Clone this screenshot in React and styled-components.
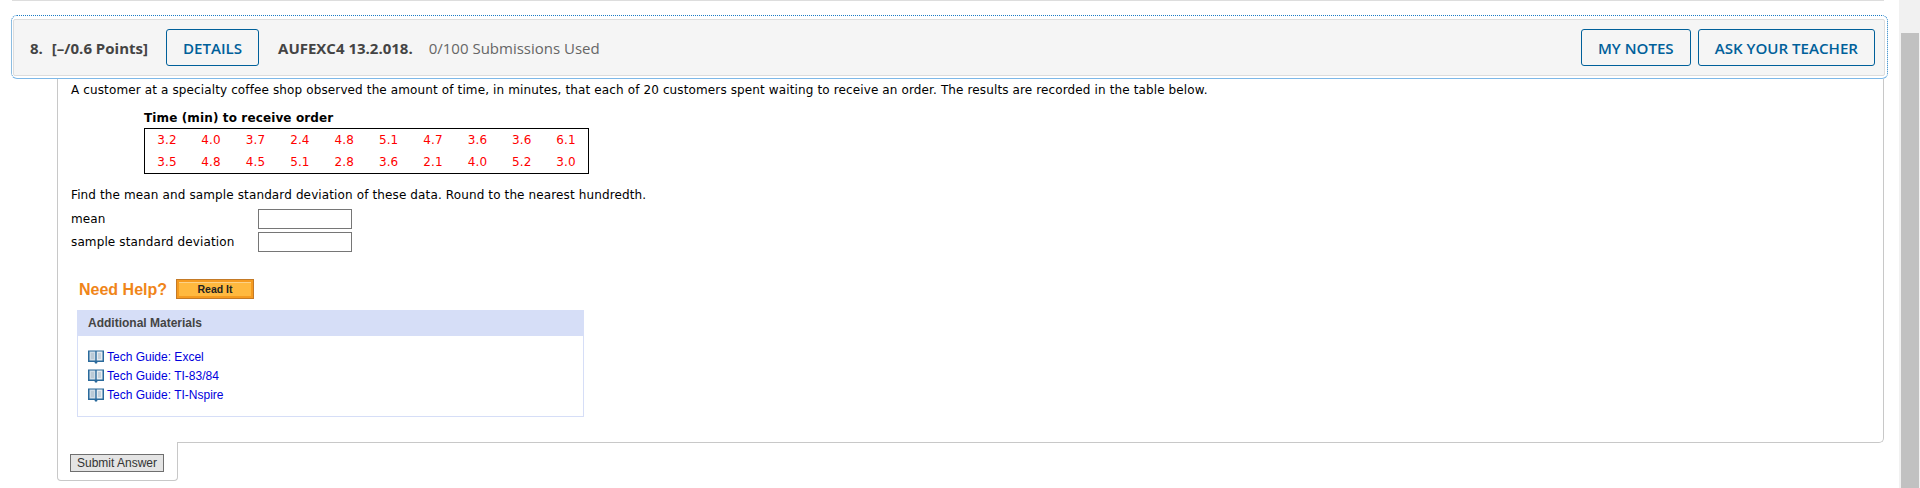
import React from "react";
import styled, { createGlobalStyle } from "styled-components";

const GlobalStyle = createGlobalStyle`
  html, body {
    margin: 0;
    padding: 0;
    height: 100%;
    overflow: hidden;
    background: #ffffff;
  }
`;

const Page = styled.div`
  display: flex;
  width: 1920px;
  height: 488px;
  overflow: hidden;
`;

const Main = styled.div`
  flex: 1;
  min-width: 0;
`;

const Track = styled.div`
  width: 21px;
  padding: 33px 1px 0 2px;
  box-sizing: border-box;
  background: #f1f1f1;
`;

const Thumb = styled.div`
  height: 455px;
  background: #c1c1c1;
`;

const TopRule = styled.div`
  height: 1px;
  margin: 0 15px 14px 12px;
  background: #dddddd;
`;

const FocusRing = styled.div`
  margin: 0 11px 0 11px;
  padding: 3px 2px 2px 1px;
  border: 1px dotted #1c7cc4;
  border-bottom: 1px solid #7db8e8;
  border-radius: 6px;
`;

const QuestionBar = styled.div`
  display: flex;
  align-items: center;
  height: 57px;
  box-sizing: border-box;
  padding: 0 9px 0 16px;
  background: #f5f5f5;
  border: 1px solid #dddddd;
  border-radius: 2px;
  font-family: "Open Sans", sans-serif;
  font-size: 15px;
  color: #444444;
`;

const Number = styled.span`
  font-weight: 700;
  margin-right: 9px;
`;

const Points = styled.span`
  font-weight: 700;
  margin-right: 18px;
`;

const OutlineButton = styled.button`
  height: 37px;
  padding: 0 16px;
  margin-left: ${(p) => p.$left || 0}px;
  background: transparent;
  border: 1px solid #00609a;
  border-radius: 3px;
  color: #00609a;
  font-family: "Open Sans", sans-serif;
  font-size: 15.1px;
  font-weight: 600;
`;

const Code = styled.span`
  font-weight: 700;
  margin-left: 19px;
`;

const Used = styled.span`
  margin-left: 16px;
  color: #666666;
`;

const Spacer = styled.div`
  flex: 1;
`;

const QuestionBody = styled.div`
  margin: 0 15px 0 57px;
  height: 364px;
  box-sizing: border-box;
  padding: 3px 0 0 13px;
  border: 1px solid #c8c8c8;
  border-top: 0;
  border-radius: 0 0 5px 0;
  font-family: "DejaVu Sans", sans-serif;
  font-size: 12px;
  letter-spacing: 0.125px;
  color: #000000;
`;

const Para = styled.div`
  line-height: 16px;
`;

const DataBlock = styled.div`
  margin: 12px 0 0 73px;
`;

const DataTitle = styled.div`
  font-weight: 700;
  line-height: 16px;
  margin-bottom: 2px;
`;

const DataTable = styled.table`
  border-collapse: collapse;
  table-layout: fixed;
  width: 445px;
  border: 1px solid #000000;
  td {
    height: 22px;
    padding: 0;
    text-align: center;
    color: #ff0000;
    font-family: "DejaVu Sans", sans-serif;
    font-size: 12px;
  }
`;

const FindLine = styled(Para)`
  margin-top: 13px;
`;

const AnswerGrid = styled.div`
  display: grid;
  grid-template-columns: 187px 94px;
  row-gap: 3px;
  margin-top: 6px;
  align-items: center;
`;

const AnswerInput = styled.input`
  width: 94px;
  height: 20px;
  box-sizing: border-box;
  border: 1px solid #767676;
  background: #ffffff;
  padding: 0;
`;

const HelpRow = styled.div`
  display: flex;
  align-items: center;
  height: 20px;
  margin: 27px 0 0 8px;
  letter-spacing: 0;
`;

const NeedHelp = styled.span`
  font-family: "Liberation Sans", sans-serif;
  font-weight: 700;
  font-size: 16px;
  color: #f08519;
  margin: 1px 9px 0 0;
`;

const ReadIt = styled.button`
  width: 78px;
  height: 20px;
  padding: 0;
  background: #ffb93f;
  border: 1px solid #c47a26;
  box-shadow: inset 0 0 0 2px #f59b20, inset 0 3px 0 #fcd288;
  font-family: "Liberation Sans", sans-serif;
  font-size: 10.5px;
  font-weight: 700;
  color: #222222;
`;

const Materials = styled.div`
  width: 507px;
  height: 107px;
  box-sizing: border-box;
  margin: 11px 0 0 6px;
  border: 1px solid #d6def7;
  font-family: "Liberation Sans", sans-serif;
  font-size: 12px;
  letter-spacing: 0;
`;

const MaterialsHead = styled.div`
  height: 25px;
  line-height: 24px;
  padding-left: 10px;
  background: #d6def7;
  font-weight: 700;
  color: #444444;
`;

const MaterialsList = styled.div`
  display: flex;
  flex-direction: column;
  padding: 11px 0 0 10px;
`;

const MaterialLink = styled.a`
  display: flex;
  align-items: center;
  gap: 3px;
  height: 19px;
  color: #0000dd;
`;

const SubmitTab = styled.div`
  width: 121px;
  height: 39px;
  box-sizing: border-box;
  margin: -1px 0 0 57px;
  padding: 12px 0 0 12px;
  position: relative;
  background: #ffffff;
  border: 1px solid #c8c8c8;
  border-top: 0;
  border-radius: 0 0 4px 4px;
`;

const SubmitButton = styled.button`
  display: block;
  width: 94px;
  height: 18px;
  padding: 0;
  background: #e4e4e4;
  border: 1px solid #6f6f6f;
  font-family: "Liberation Sans", sans-serif;
  font-size: 12px;
  color: #333333;
`;

const BookIcon = () => (
  <svg width="16" height="14" viewBox="0 0 16 14">
    <path d="M0 0.500h16v11.500H9.500l-.5 1.500H7L6.500 12H0z" fill="#2a6a9c" />
    <path d="M1.500 1.500h5.800v9H1.500z" fill="#cfdce6" />
    <path d="M8.700 1.500h5.800v9H8.700z" fill="#e6ecf1" />
    <path d="M3 4h3M3 6h3M3 8h3M10 4h3M10 6h3M10 8h3" stroke="#a5b8c6" strokeWidth="1" />
  </svg>
);

const rows = [
  ["3.2", "4.0", "3.7", "2.4", "4.8", "5.1", "4.7", "3.6", "3.6", "6.1"],
  ["3.5", "4.8", "4.5", "5.1", "2.8", "3.6", "2.1", "4.0", "5.2", "3.0"],
];

const guides = ["Tech Guide: Excel", "Tech Guide: TI-83/84", "Tech Guide: TI-Nspire"];

const App = () => {
  return (
    <Page>
      <GlobalStyle />
      <Main>
        <TopRule />
        <FocusRing>
          <QuestionBar>
            <Number>8.</Number>
            <Points>[–/0.6 Points]</Points>
            <OutlineButton>DETAILS</OutlineButton>
            <Code>AUFEXC4 13.2.018.</Code>
            <Used>0/100 Submissions Used</Used>
            <Spacer />
            <OutlineButton>MY NOTES</OutlineButton>
            <OutlineButton $left={7}>ASK YOUR TEACHER</OutlineButton>
          </QuestionBar>
        </FocusRing>
        <QuestionBody>
          <Para>
            A customer at a specialty coffee shop observed the amount of time, in minutes, that each of 20 customers spent waiting to receive an order. The results are recorded in the table below.
          </Para>
          <DataBlock>
            <DataTitle>Time (min) to receive order</DataTitle>
            <DataTable>
              <tbody>
                {rows.map((row, i) => (
                  <tr key={i}>
                    {row.map((v, j) => (
                      <td key={j}>{v}</td>
                    ))}
                  </tr>
                ))}
              </tbody>
            </DataTable>
          </DataBlock>
          <FindLine>Find the mean and sample standard deviation of these data. Round to the nearest hundredth.</FindLine>
          <AnswerGrid>
            <span>mean</span>
            <AnswerInput />
            <span>sample standard deviation</span>
            <AnswerInput />
          </AnswerGrid>
          <HelpRow>
            <NeedHelp>Need Help?</NeedHelp>
            <ReadIt>Read It</ReadIt>
          </HelpRow>
          <Materials>
            <MaterialsHead>Additional Materials</MaterialsHead>
            <MaterialsList>
              {guides.map((g) => (
                <MaterialLink key={g}>
                  <BookIcon />
                  {g}
                </MaterialLink>
              ))}
            </MaterialsList>
          </Materials>
        </QuestionBody>
        <SubmitTab>
          <SubmitButton>Submit Answer</SubmitButton>
        </SubmitTab>
      </Main>
      <Track>
        <Thumb />
      </Track>
    </Page>
  );
};

export default App;
